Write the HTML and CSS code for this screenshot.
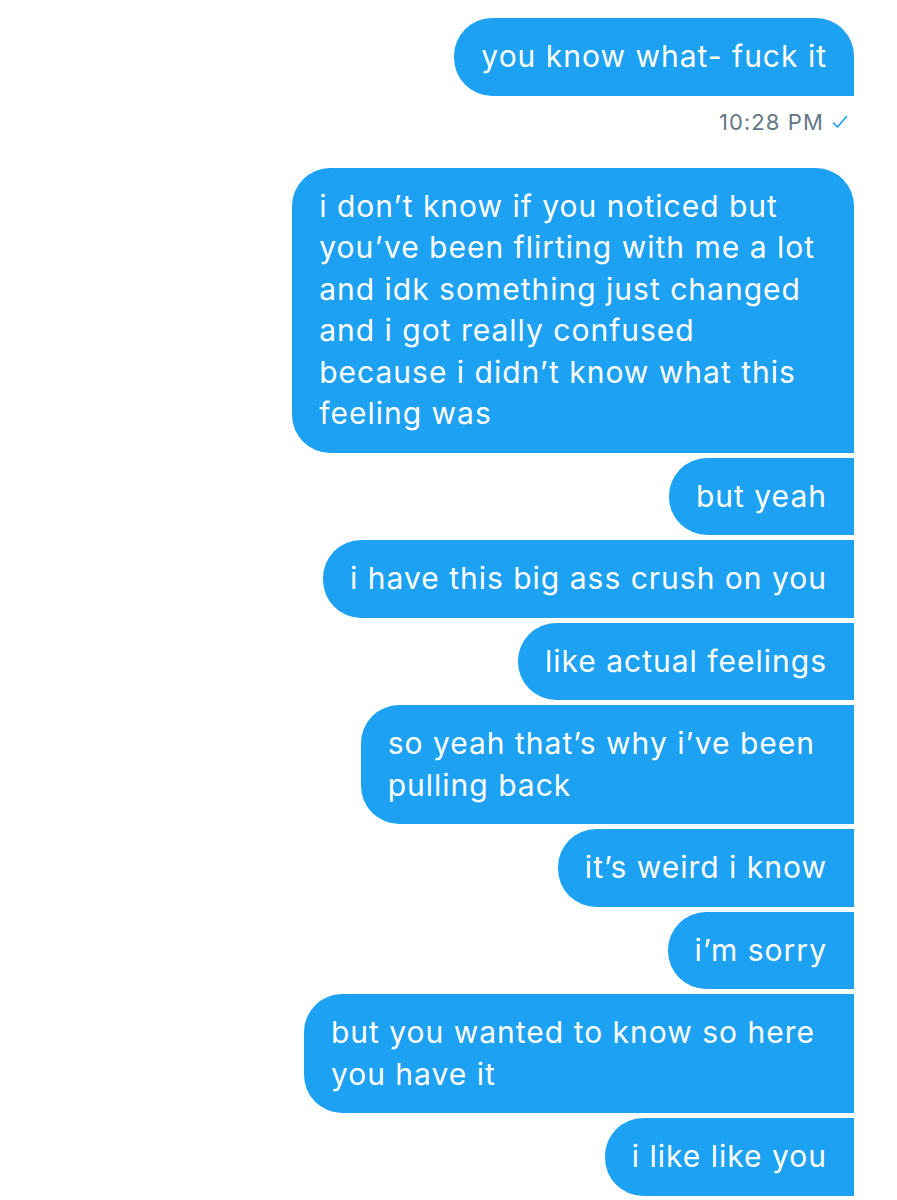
FILE: index.html
```html
<!DOCTYPE html>
<html>
<head>
<meta charset="utf-8">
<link rel="stylesheet" href="styles.css">
</head>
<body>
<div class="thread">
  <div class="bubble first">you know what- fuck it</div>
  <div class="meta">10:28 PM <svg class="check" width="16" height="14" viewBox="0 0 16 14"><path d="M1.5 8 L5.5 12 L14.5 1.5" fill="none" stroke="#1da1f2" stroke-width="1.6" stroke-linecap="round" stroke-linejoin="round"/></svg></div>
  <div class="bubble top multi">i don’t know if you noticed but<br>you’ve been flirting with me a lot<br>and idk something just changed<br>and i got really confused<br>because i didn’t know what this<br>feeling was</div>
  <div class="bubble">but yeah</div>
  <div class="bubble">i have this big ass crush on you</div>
  <div class="bubble">like actual feelings</div>
  <div class="bubble multi">so yeah that’s why i’ve been<br>pulling back</div>
  <div class="bubble">it’s weird i know</div>
  <div class="bubble">i’m sorry</div>
  <div class="bubble multi">but you wanted to know so here<br>you have it</div>
  <div class="bubble">i like like you</div>
</div>
</body>
</html>
```
FILE: styles.css
```css
html, body {
  margin: 0;
  padding: 0;
  background: #ffffff;
}
body {
  width: 897px;
  height: 1200px;
  overflow: hidden;
  font-family: Inter, "Noto Sans", sans-serif;
}
.thread {
  display: flex;
  flex-direction: column;
  align-items: flex-end;
  gap: 5px;
  padding: 18px 43px 0 0;
}
.bubble {
  background: #1da1f2;
  color: #ffffff;
  font-size: 30px;
  letter-spacing: 1px;
  line-height: 41.5px;
  padding: 18px 27px 18px 27px;
  border-radius: 38px 0 0 38px;
  white-space: nowrap;
}
.bubble.multi {
  padding-right: 39px;
}
.bubble.first,
.bubble.top {
  border-top-right-radius: 38px;
}
.meta {
  color: #657786;
  font-size: 22px;
  letter-spacing: 1.1px;
  line-height: 24px;
  margin: 9px 6px 29px 0;
  display: flex;
  align-items: center;
  gap: 8px;
}
.check {
  display: block;
}
```
